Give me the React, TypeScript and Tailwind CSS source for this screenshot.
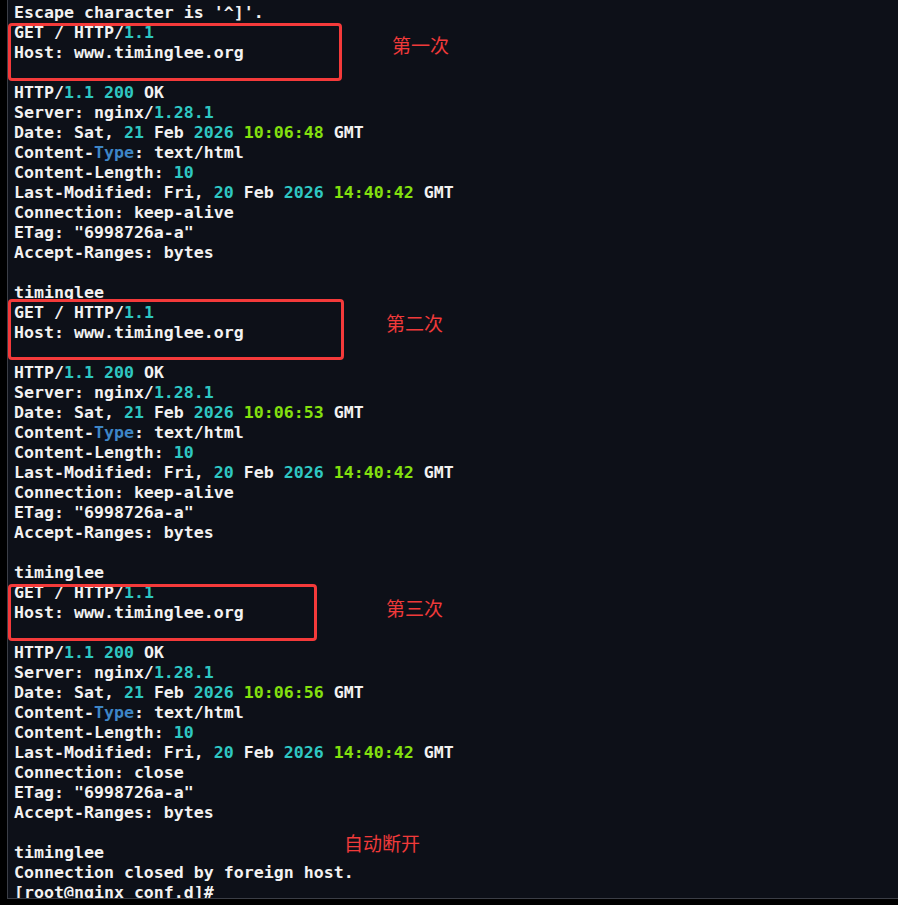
type Seg = [string, 'w' | 'c' | 'g' | 'b'];

const color = {
  w: 'text-[#f2f2f2]',
  c: 'text-[#2fc7c2]',
  g: 'text-[#84e00e]',
  b: 'text-[#3e86c6]',
};

const response = (time: string, conn: string): Seg[][] => [
  [['HTTP/', 'w'], ['1.1', 'c'], [' ', 'w'], ['200', 'c'], [' OK', 'w']],
  [['Server: nginx/', 'w'], ['1.28.1', 'c']],
  [['Date: Sat, ', 'w'], ['21', 'c'], [' Feb ', 'w'], ['2026', 'c'], [' ', 'w'], [time, 'g'], [' GMT', 'w']],
  [['Content-', 'w'], ['Type', 'b'], [': text/html', 'w']],
  [['Content-Length: ', 'w'], ['10', 'c']],
  [['Last-Modified: Fri, ', 'w'], ['20', 'c'], [' Feb ', 'w'], ['2026', 'c'], [' ', 'w'], ['14:40:42', 'g'], [' GMT', 'w']],
  [['Connection: ' + conn, 'w']],
  [['ETag: "6998726a-a"', 'w']],
  [['Accept-Ranges: bytes', 'w']],
  [],
  [['timinglee', 'w']],
];

const request: Seg[][] = [
  [['GET / HTTP/', 'w'], ['1.1', 'c']],
  [['Host: www.timinglee.org', 'w']],
  [],
];

const lines: Seg[][] = [
  [["Escape character is '^]'.", 'w']],
  ...request,
  ...response('10:06:48', 'keep-alive'),
  ...request,
  ...response('10:06:53', 'keep-alive'),
  ...request,
  ...response('10:06:56', 'close'),
  [['Connection closed by foreign host.', 'w']],
  [['[root@nginx conf.d]#', 'w']],
];

// red annotation boxes drawn over the terminal
const boxes = [
  { cls: 'top-[23px] w-[334px] h-[58px]', label: '第一次', labelCls: 'top-[33px] left-[384px]' },
  { cls: 'top-[299px] w-[336px] h-[61px]', label: '第二次', labelCls: 'top-[311px] left-[378px]' },
  { cls: 'top-[584px] w-[309px] h-[57px]', label: '第三次', labelCls: 'top-[596px] left-[378px]' },
];

export default function App() {
  return (
    <div className="h-[905px] w-full bg-black overflow-hidden">
      <div className="relative ml-[7px] h-[899px] border-l border-b border-[#3b3e46] bg-[#0d1018] pl-[6px] pt-[3px] overflow-hidden font-['DejaVu_Sans_Mono','Liberation_Mono',monospace] text-[16.6px] leading-[20px] font-bold">
        {lines.map((line, i) => (
          <div key={i} className="h-[20px] whitespace-pre">
            {line.map(([t, c], j) => (
              <span key={j} className={color[c]}>
                {t}
              </span>
            ))}
          </div>
        ))}

        {boxes.map((b, i) => (
          <div key={i}>
            <div className={`absolute left-0 rounded-[4px] border-[3px] border-[#f43a3a] ${b.cls}`} />
            <div className={`absolute text-[19px] leading-[24px] font-normal text-[#f03a3a] font-['Noto_Sans_CJK_SC',sans-serif] ${b.labelCls}`}>
              {b.label}
            </div>
          </div>
        ))}
        <div className="absolute top-[831px] left-[336px] text-[19px] leading-[24px] font-normal text-[#f03a3a] font-['Noto_Sans_CJK_SC',sans-serif]">
          自动断开
        </div>
      </div>
    </div>
  );
}
